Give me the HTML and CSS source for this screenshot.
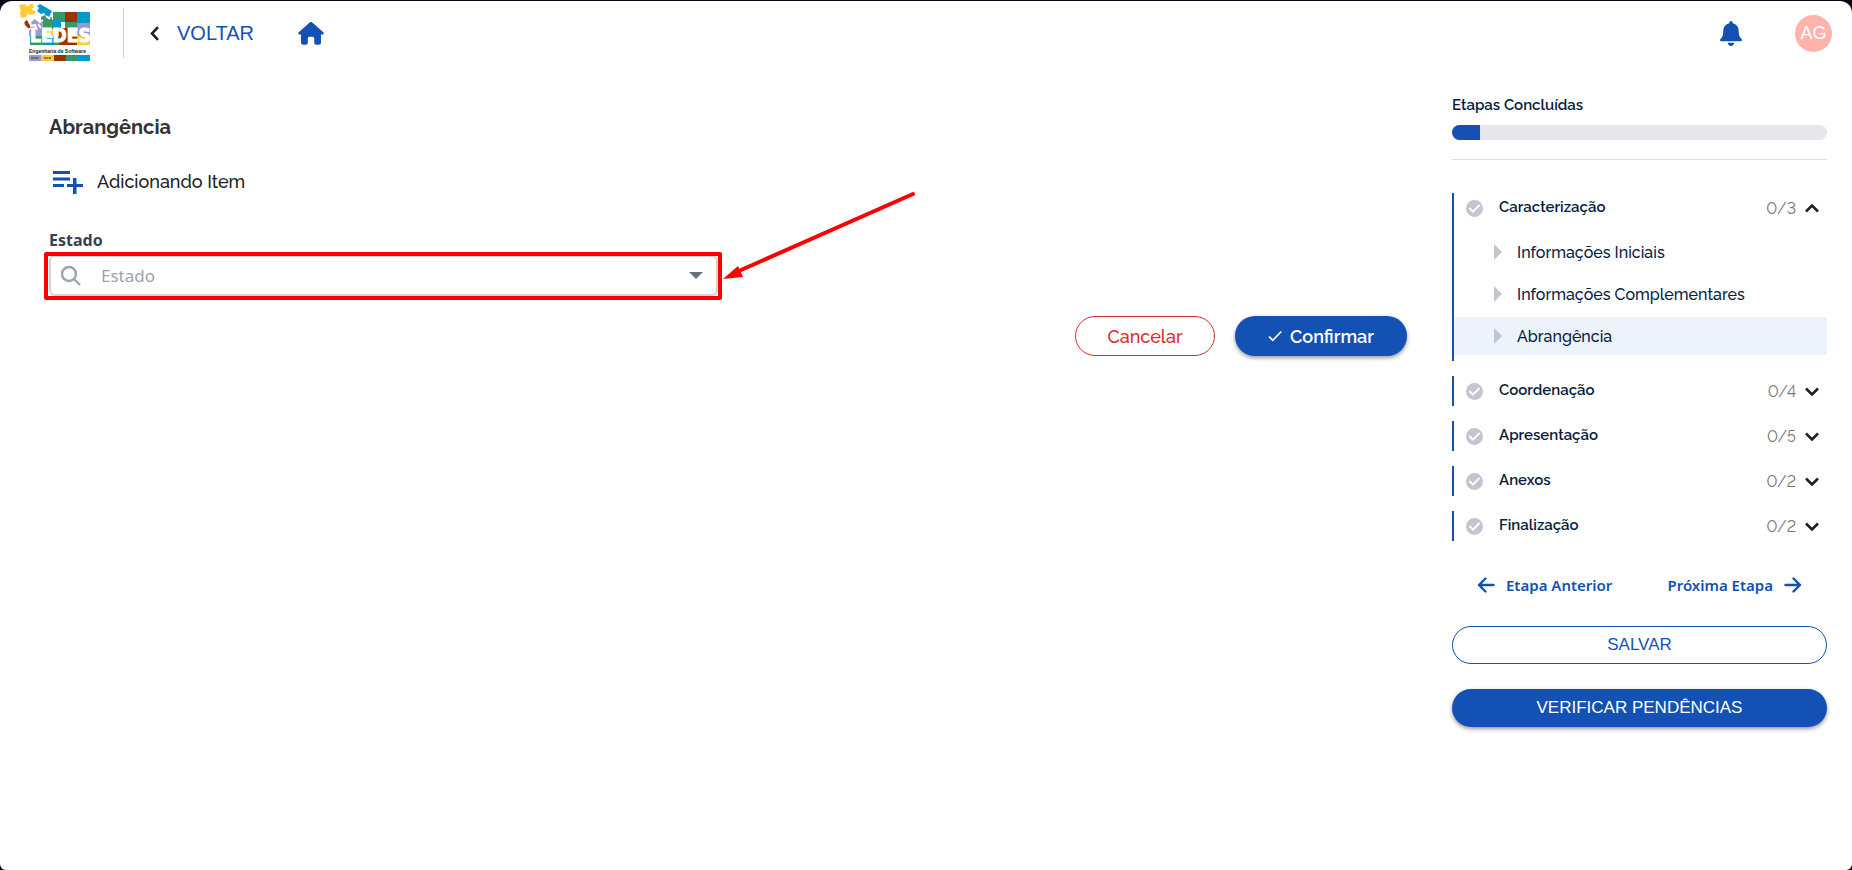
FILE: index.html
```html
<!DOCTYPE html>
<html lang="pt-br">
<head>
<meta charset="utf-8">
<title>LEDES - Abrangência</title>
<link rel="stylesheet" href="styles.css">
</head>
<body>

<!-- shared icons -->
<svg class="sprite" aria-hidden="true">
    <symbol id="check-circle" viewBox="0 0 24 24">
        <path d="M12 0a12 12 0 1 0 0 24a12 12 0 0 0 0-24zM9.800 18.200L3.800 12.200l1.900-1.900l4.100 4.100l8.500-8.500l1.900 1.900z"/>
    </symbol>
    <symbol id="chevron" viewBox="0 0 14 9">
        <path d="M1 1.500l6 6l6-6" fill="none" stroke="#212121" stroke-width="2.600"/>
    </symbol>
    <symbol id="arrow" viewBox="0 0 18 16">
        <path d="M1.500 8H16M9.500 1.500L16 8l-6.500 6.500" fill="none" stroke="#1351b4" stroke-width="2.400" stroke-linecap="round" stroke-linejoin="round"/>
    </symbol>
</svg>

<div class="page">
    <header class="topbar">
        <a href="#" class="logo" title="LEDES">
            <svg width="72" height="58" viewBox="0 0 72 58">
                <path fill="#339966" d="M34 8h13v10H34zM46 17h12v9H46zM11 32h15v9H11zM34 28h6v13h-6z"/>
                <path fill="#993300" d="M46 8h12v10H46zM40 24h9v17h-9zM46 30h13v11H46z"/>
                <path fill="#0099cc" d="M58 8h13v12H58zM30 16h12v9H30zM25 34h9v7h-9z"/>
                <path fill="#ffcc33" d="M26 24h14v8H26zM58 32h13v9H58z"/>
                <path fill="#9999cc" d="M10 24h16v8H10zM58 19h13v13H58z"/>
                <path fill="#339966" d="M22 13l4-2l2 3l4-1l2 4v8H23z"/>
                <path fill="#9999cc" d="M11 19l5-4l3 3l5-1v9H12z"/>
                <path fill="#993300" d="M5 17l3-1l2 4l4 3l-1 5l-3-3l-4-4z"/>
                <!-- loose pieces of the puzzle -->
                <path fill="#ffcc33" d="M0 1l6-1l1 2h3l1-2h3l1 4h-2l1 3h3l-1 3l-5 1l-2-2l-2 4l-5 1l-1-5l1-2z"/>
                <path fill="#0099cc" d="M21 0l12 7l-3 6l-3-1l-2-3l-3 1l-4-3l2-3l-2-2z"/>
                <path d="M4 18l4-4l3 3l1 5l4-1l2 5M16 13l3 1l2 4l3-2M27 12l4 3M12 24l-4 3M19 20l3 4" fill="none" stroke="#fff" stroke-width="2"/>
                <text class="logo-name" x="11" y="38">LEDES</text>
                <text class="logo-sub" x="10" y="49">Engenharia de Software</text>
                <path fill="#9999cc" d="M10 51h12v6H10z"/>
                <path fill="#ffcc33" d="M22 51h13v6H22z"/>
                <path fill="#993300" d="M35 51h12v6H35z"/>
                <path fill="#339966" d="M47 51h12v6H47z"/>
                <path fill="#0099cc" d="M59 51h12v6H59z"/>
                <path stroke="#555" stroke-width="1.500" stroke-dasharray="2 .5" d="M12 54h8M25 54h7"/>
            </svg>
        </a>
        <a href="#" class="back">
            <svg width="9" height="15" viewBox="0 0 9 15"><path d="M8 1.200L2 7.500l6 6.300" fill="none" stroke="#212121" stroke-width="2.600"/></svg>
            VOLTAR
        </a>
        <a href="#" class="home" aria-label="Início">
            <svg width="26" height="23" viewBox="0 0 26 23"><path fill="#1351b4" d="M11.700.5a2 2 0 0 1 2.600 0L25.300 10.200c.9.900.4 2.300-.9 2.300H23v8a2.200 2.200 0 0 1-2.200 2.200h-2.600a2 2 0 0 1-2-2v-4.500a1.500 1.500 0 0 0-1.500-1.500h-3.400a1.500 1.500 0 0 0-1.500 1.500v4.500a2 2 0 0 1-2 2H5.200A2.200 2.200 0 0 1 3 20.500v-8H1.600c-1.300 0-1.800-1.400-.9-2.300z"/></svg>
        </a>
        <button type="button" class="bell" aria-label="Notificações">
            <svg width="22" height="25" viewBox="0 0 22 25"><path fill="#1351b4" d="M11 0a1.700 1.700 0 0 0-1.700 1.700v.5C5.600 3 3.300 6 3.300 9.800c0 4.200-.8 6.200-2.800 8.200c-.9 1-.3 2.300 1 2.300h19c1.300 0 1.900-1.300 1-2.300c-2-2-2.800-4-2.800-8.200c0-3.800-2.300-6.800-6-7.600v-.5A1.700 1.700 0 0 0 11 0zM7.900 21.800a3.100 3.100 0 0 0 6.200 0z"/></svg>
        </button>
        <button type="button" class="avatar">AG</button>
    </header>

    <div class="content">
        <main class="main">
            <h1>Abrangência</h1>
            <h2>
                <svg width="30" height="23" viewBox="0 0 30 23"><path fill="#1351b4" d="M0 0h17v3H0zM0 6.500h17v3H0zM0 13h11v3H0zM20 7h3.500v6H30v3h-6.500v7H20v-7h-6v-3h6z"/></svg>
                Adicionando Item
            </h2>
            <div class="field">
                <label for="estado">Estado</label>
                <div class="combo">
                    <svg class="search" width="20" height="20" viewBox="0 0 20 20"><path d="M13 13l6 6M15 8A7 7 0 1 1 1 8a7 7 0 0 1 14 0z" fill="none" stroke="#9ca3af" stroke-width="2.400"/></svg>
                    <input type="text" id="estado" placeholder="Estado">
                    <button type="button" class="caret" aria-label="Abrir"></button>
                    <div class="highlight"></div>
                    <svg class="pointer" width="196" height="92" viewBox="0 0 196 92">
                        <path d="M18 80L190 4" stroke="#f00" stroke-width="4" stroke-linecap="round"/>
                        <path d="M0 89l15-13l5 11z" fill="#f00"/>
                    </svg>
                </div>
            </div>
            <div class="actions">
                <button type="button" class="btn cancel">Cancelar</button>
                <button type="button" class="btn primary confirm">
                    <svg width="14" height="12" viewBox="0 0 14 12"><path d="M1 6.500l3.800 3.800L13.300 1.500" fill="none" stroke="#fff" stroke-width="1.700"/></svg>
                    Confirmar
                </button>
            </div>
        </main>

        <aside class="sidebar">
            <p class="progress-label" id="etapas">Etapas Concluídas</p>
            <div class="progress" role="progressbar" aria-labelledby="etapas"><div class="bar" style="width: 7.500%"></div></div>
            <nav class="steps">
                <div class="step open">
                    <button type="button" class="step-head">
                        <svg class="check" width="17" height="17"><use href="#check-circle"/></svg>
                        <span class="name">Caracterização</span>
                        <span class="count">0/3</span>
                        <svg class="chev up" width="14" height="9"><use href="#chevron"/></svg>
                    </button>
                    <a href="#" class="sub">Informações Iniciais</a>
                    <a href="#" class="sub">Informações Complementares</a>
                    <a href="#" class="sub active">Abrangência</a>
                </div>
                <div class="step">
                    <button type="button" class="step-head">
                        <svg class="check" width="17" height="17"><use href="#check-circle"/></svg>
                        <span class="name">Coordenação</span>
                        <span class="count">0/4</span>
                        <svg class="chev" width="14" height="9"><use href="#chevron"/></svg>
                    </button>
                </div>
                <div class="step">
                    <button type="button" class="step-head">
                        <svg class="check" width="17" height="17"><use href="#check-circle"/></svg>
                        <span class="name">Apresentação</span>
                        <span class="count">0/5</span>
                        <svg class="chev" width="14" height="9"><use href="#chevron"/></svg>
                    </button>
                </div>
                <div class="step">
                    <button type="button" class="step-head">
                        <svg class="check" width="17" height="17"><use href="#check-circle"/></svg>
                        <span class="name">Anexos</span>
                        <span class="count">0/2</span>
                        <svg class="chev" width="14" height="9"><use href="#chevron"/></svg>
                    </button>
                </div>
                <div class="step">
                    <button type="button" class="step-head">
                        <svg class="check" width="17" height="17"><use href="#check-circle"/></svg>
                        <span class="name">Finalização</span>
                        <span class="count">0/2</span>
                        <svg class="chev" width="14" height="9"><use href="#chevron"/></svg>
                    </button>
                </div>
            </nav>
            <div class="pager">
                <button type="button"><svg class="prev" width="18" height="16"><use href="#arrow"/></svg>Etapa Anterior</button>
                <button type="button">Próxima Etapa<svg width="18" height="16"><use href="#arrow"/></svg></button>
            </div>
            <button type="button" class="btn wide save">SALVAR</button>
            <button type="button" class="btn wide primary">VERIFICAR PENDÊNCIAS</button>
        </aside>
    </div>
</div>

</body>
</html>
```

FILE: styles.css
```css
* {
    box-sizing: border-box;
}

html {
    background: #050517;
}

body {
    margin: 0;
    padding-top: 1px;
    font-family: Raleway, Lato, sans-serif;
    font-variant-numeric: lining-nums;
    color: #071d41;
}

button {
    margin: 0;
    padding: 0;
    border: 0;
    background: none;
    color: inherit;
    font: inherit;
    font-variant-numeric: inherit;
    cursor: pointer;
}

a {
    color: inherit;
    text-decoration: none;
}

svg {
    display: block;
    flex: none;
}

.sprite {
    position: absolute;
    width: 0;
    height: 0;
}

.page {
    min-height: calc(100vh - 1px);
    background: #fff;
    border-radius: 12px 12px 6px 6px;
}

/* top bar */
.topbar {
    display: flex;
    align-items: center;
    height: 64px;
    padding: 0 20px 0 19px;
}

.logo {
    padding-right: 32px;
    border-right: 1px solid #ccc;
    height: 50px;
    display: flex;
    align-items: center;
}

.logo-name {
    font: bold 19px "DejaVu Sans Condensed", "DejaVu Sans", sans-serif;
    fill: #fff;
    stroke: #fff;
}

.logo-sub {
    font: bold 5px "Liberation Sans", Arial, sans-serif;
    fill: #222;
}

.back {
    display: flex;
    align-items: center;
    gap: 18px;
    margin-left: 26px;
    color: #1351b4;
    font: 20px "Liberation Sans", Arial, sans-serif;
}

.home {
    margin-left: 44px;
}

.bell {
    margin-left: auto;
}

.avatar {
    width: 37px;
    height: 37px;
    margin-left: 53px;
    border-radius: 50%;
    background: #ffb3ab;
    color: #fff;
    font: 18px "Liberation Sans", Arial, sans-serif;
}

/* form */
.content {
    display: flex;
    gap: 45px;
    padding: 28px 25px 28px 49px;
}

.main {
    flex: 1;
    padding-top: 20px;
}

h1 {
    margin: 0 0 27px;
    font-size: 20px;
    line-height: 28px;
    font-weight: bold;
    color: #333;
}

h2 {
    display: flex;
    align-items: center;
    gap: 14px;
    margin: 0 0 31px;
    padding-left: 4px;
    font-size: 18px;
    line-height: 28px;
    font-weight: 500;
    color: #212121;
}

.field {
    width: calc(50% - 10px);
    font-family: "Noto Sans", sans-serif;
}

.field label {
    display: block;
    margin-bottom: 2px;
    font-size: 16px;
    line-height: 26px;
    font-weight: bold;
    color: #374151;
}

.combo {
    position: relative;
    display: flex;
    align-items: center;
    height: 41px;
    padding: 0 13px 0 10px;
    border: 2px solid #d1d5db;
    border-radius: 6px;
}

.combo input {
    flex: 1;
    min-width: 0;
    margin-left: 20px;
    padding: 0;
    border: 0;
    outline: 0;
    background: none;
    font: 17px "Noto Sans", sans-serif;
}

.combo input::placeholder {
    color: #9ca3af;
    opacity: 1;
}

.caret {
    border: 7px solid transparent;
    border-top-color: #6b7280;
    border-bottom: 0;
}

.highlight {
    position: absolute;
    inset: -5px -6px -6px -7px;
    border: 4px solid #f00;
    border-radius: 2px;
    pointer-events: none;
}

.pointer {
    position: absolute;
    left: calc(100% + 7px);
    bottom: 12px;
    pointer-events: none;
}

.actions {
    display: flex;
    justify-content: flex-end;
    gap: 20px;
    margin-top: 20px;
}

.btn {
    display: flex;
    align-items: center;
    justify-content: center;
    height: 40px;
    border-radius: 20px;
    font-size: 18px;
    font-weight: 500;
}

.primary {
    background: #1351b4;
    color: #fff;
    box-shadow: 0 2px 4px rgba(0, 0, 0, .4);
}

.cancel {
    width: 140px;
    border: 1px solid #d32f2f;
    color: #d32f2f;
}

.confirm {
    width: 172px;
    gap: 8px;
    font-weight: 600;
}

/* steps */
.sidebar {
    width: 375px;
}

.progress-label {
    margin: 0 0 8px;
    font-size: 15px;
    line-height: 24px;
    font-weight: 600;
}

.progress {
    height: 15px;
    border-radius: 8px;
    background: #e5e7eb;
    overflow: hidden;
}

.bar {
    height: 100%;
    background: #1351b4;
}

.steps {
    display: flex;
    flex-direction: column;
    gap: 15px;
    margin-top: 19px;
    padding-top: 33px;
    border-top: 1px solid #dcdee0;
}

.step {
    border-left: 2px solid #1351b4;
}

.step-head {
    display: flex;
    align-items: center;
    width: 100%;
    height: 30px;
    padding: 0 8px 0 12px;
    font-size: 16px;
    text-align: left;
}

.check {
    fill: #c5c5d0;
}

.name {
    flex: 1;
    margin-left: 16px;
    padding-bottom: 2px;
    font-size: 15px;
    font-weight: 600;
}

.count {
    margin-right: 9px;
    color: #777;
}

.up {
    transform: rotate(180deg);
}

.open {
    padding-bottom: 6px;
}

.open .step-head {
    margin-bottom: 10px;
}

.sub {
    display: flex;
    align-items: center;
    gap: 15px;
    height: 38px;
    padding-left: 40px;
    font-size: 16px;
    font-weight: 500;
}

.sub + .sub {
    margin-top: 4px;
}

.sub::before {
    content: "";
    border: 8px solid transparent;
    border-left-color: #c5c5d0;
    border-right: 0;
}

.active {
    background: #ecf3fb;
}

.pager {
    display: flex;
    justify-content: space-between;
    margin: 32px 25px 29px;
    color: #1351b4;
    font: 600 15px "Noto Sans", sans-serif;
}

.pager button {
    display: flex;
    align-items: center;
    gap: 11px;
    height: 24px;
}

.prev {
    transform: scaleX(-1);
}

.wide {
    width: 100%;
    height: 38px;
    font: 17px "Liberation Sans", Arial, sans-serif;
}

.save {
    margin-bottom: 25px;
    border: 1px solid #1351b4;
    color: #1351b4;
}
```
